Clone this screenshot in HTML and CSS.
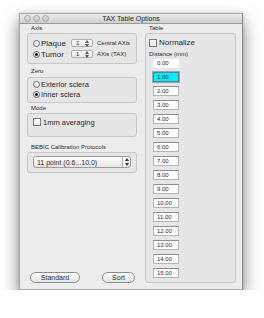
FILE: index.html
```html
<!DOCTYPE html>
<html lang="en">
<head>
  <meta charset="UTF-8" />
  <title>TAX Table Options</title>
  <link rel="stylesheet" href="styles.css">
</head>
<body>

  <div class="window">
    <div class="titlebar">
      <span class="light"></span>
      <span class="light"></span>
      <span class="light"></span>
      <span class="title">TAX Table Options</span>
    </div>

    <div class="content">
      <div class="left">
        <!-- Axis -->
        <div class="label">Axis</div>
        <div class="group axis">
          <div class="row">
            <span class="choice"><span class="radio"></span>Plaque</span>
            <span class="stepper">1<svg width="4" height="7" viewBox="0 0 4 7"><path d="M0 3 L2 0 L4 3 Z M0 4 L2 7 L4 4 Z" fill="#555"/></svg></span>
            <span class="note">Central AXis</span>
          </div>
          <div class="row">
            <span class="choice"><span class="radio on"></span>Tumor</span>
            <span class="stepper">1<svg width="4" height="7" viewBox="0 0 4 7"><path d="M0 3 L2 0 L4 3 Z M0 4 L2 7 L4 4 Z" fill="#555"/></svg></span>
            <span class="note">AXis (TAX)</span>
          </div>
        </div>

        <!-- Zero -->
        <div class="label gap">Zero</div>
        <div class="group zero">
          <div class="row small"><span class="radio"></span>Exterior sclera</div>
          <div class="row small"><span class="radio on"></span>Inner sclera</div>
        </div>

        <!-- Mode -->
        <div class="label gap2">Mode</div>
        <div class="group mode">
          <div class="row small"><span class="check"></span>1mm averaging</div>
        </div>

        <!-- Calibration -->
        <div class="label gap3">BEBIC Calibration Protocols</div>
        <div class="group bebic">
          <div class="popup">
            <span>11 point (0.6...10.0)</span>
            <span class="arrows"><svg width="4" height="8" viewBox="0 0 4 8"><path d="M0 3 L2 0 L4 3 Z M0 5 L2 8 L4 5 Z" fill="#333"/></svg></span>
          </div>
        </div>

        <div class="buttons">
          <button class="btn standard">Standard</button>
          <button class="btn sort">Sort</button>
        </div>
      </div>

      <div class="right">
        <div class="label">Table</div>
        <div class="group table">
          <div class="normalize"><span class="check"></span>Normalize</div>
          <div class="dist">Distance (mm)</div>
          <div class="field plain">0.00</div>
          <div class="fields">
            <div class="field focus">1.00</div>
            <div class="field">2.00</div>
            <div class="field">3.00</div>
            <div class="field">4.00</div>
            <div class="field">5.00</div>
            <div class="field">6.00</div>
            <div class="field">7.00</div>
            <div class="field">8.00</div>
            <div class="field">9.00</div>
            <div class="field">10.00</div>
            <div class="field">11.00</div>
            <div class="field">12.00</div>
            <div class="field">13.00</div>
            <div class="field">14.00</div>
            <div class="field">15.00</div>
          </div>
        </div>
      </div>
    </div>
  </div>

</body>
</html>
```

FILE: styles.css
```css
body {
  margin: 0;
  background: #fff;
  font-family: "Liberation Sans", Arial, sans-serif;
  color: #2a2a2a;
}
.window {
  margin: 13px 0 0 19px;
  width: 224px;
  height: 277px;
  box-sizing: border-box;
  background: #ececec;
  border: 1px solid #a8a8a8;
  border-right-color: #8c8c8c;
  box-shadow: 0 8px 16px rgba(0, 0, 0, 0.5), 0 0 3px rgba(0, 0, 0, 0.15);
  display: flex;
  flex-direction: column;
}
.titlebar {
  position: relative;
  height: 9px;
  background: linear-gradient(#ebebeb, #cfcfcf);
  border-bottom: 1px solid #9a9a9a;
  display: flex;
  align-items: center;
  gap: 2px;
  padding-left: 4px;
}
.light {
  width: 5px;
  height: 5px;
  border-radius: 50%;
  background: linear-gradient(#e4e4e4, #c2c2c2);
  border: 1px solid #a6a6a6;
}
.title {
  position: absolute;
  left: 0;
  right: 0;
  top: 0;
  text-align: center;
  font-size: 7px;
  line-height: 9px;
  color: #2a2a2a;
}
.content {
  flex: 1;
  display: flex;
  gap: 8px;
  padding: 1px 6px 6px 7px;
}
.left {
  width: 110px;
  display: flex;
  flex-direction: column;
}
.right {
  width: 91px;
  display: flex;
  flex-direction: column;
}
.label {
  font-size: 6px;
  line-height: 7px;
  padding-left: 4px;
  margin-bottom: 1px;
}
.label.gap { margin-top: 4px; margin-bottom: 2px; }
.label.gap2 { margin-top: 2px; }
.label.gap3 { margin-top: 7px; }
.group {
  border: 1px solid #c8c8c8;
  border-radius: 3px;
  background: #e6e6e6;
}
.axis {
  padding: 4px 0 4px 5px;
  display: flex;
  flex-direction: column;
  gap: 1px;
}
.row {
  height: 10px;
  display: flex;
  align-items: center;
  font-size: 8px;
}
.row.small {
  font-size: 7.5px;
}
.choice {
  width: 38px;
  display: flex;
  align-items: center;
}
.radio {
  width: 5px;
  height: 5px;
  border-radius: 50%;
  border: 1px solid #6e6e6e;
  background: linear-gradient(#fff, #e2e2e2);
  margin-right: 1px;
  position: relative;
}
.radio.on::after {
  content: "";
  position: absolute;
  left: 1px;
  top: 1px;
  width: 3px;
  height: 3px;
  border-radius: 50%;
  background: #1c1c1c;
}
.check {
  width: 6px;
  height: 6px;
  border: 1px solid #7a7a7a;
  background: linear-gradient(#fff, #e8e8e8);
  margin-right: 2px;
}
.stepper {
  width: 22px;
  height: 8px;
  box-sizing: border-box;
  border: 1px solid #b0b0b0;
  border-radius: 2px;
  background: linear-gradient(#fafafa, #e9e9e9);
  font-size: 6px;
  line-height: 6px;
  display: flex;
  align-items: center;
  justify-content: space-between;
  padding: 0 3px 0 4px;
}
.note {
  font-size: 6px;
  margin-left: 4px;
}
.zero {
  padding: 1px 0 3px 5px;
}
.mode {
  padding: 3px 0 0 5px;
  height: 19px;
}
.bebic {
  padding: 3px 5px 4px 5px;
}
.popup {
  height: 12px;
  box-sizing: border-box;
  border: 1px solid #9c9c9c;
  border-radius: 3px;
  background: linear-gradient(#ffffff, #e6e6e6);
  font-size: 7px;
  display: flex;
  align-items: center;
  justify-content: space-between;
  padding-left: 3px;
}
.arrows {
  width: 7px;
  height: 10px;
  border-left: 1px solid #b4b4b4;
  display: flex;
  align-items: center;
  justify-content: center;
}
.buttons {
  margin-top: auto;
  display: flex;
  gap: 22px;
  padding-left: 3px;
}
.btn {
  height: 11px;
  padding: 0;
  border: 1px solid #8a8a8a;
  border-radius: 6px;
  background: linear-gradient(#ffffff, #e4e4e4);
  font-family: "Liberation Sans", Arial, sans-serif;
  font-size: 7px;
  line-height: 9px;
  color: #2a2a2a;
}
.standard { width: 50px; }
.sort { width: 33px; }
.table {
  flex: 1;
  padding: 4px 0 0 3px;
}
.normalize {
  height: 9px;
  display: flex;
  align-items: center;
  font-size: 8px;
}
.dist {
  font-size: 6px;
  line-height: 7px;
  margin-top: 4px;
}
.field {
  width: 26px;
  height: 10px;
  box-sizing: border-box;
  margin-left: 4px;
  background: #fff;
  border: 1px solid #b4b4b4;
  border-top-color: #8e8e8e;
  font-size: 6px;
  line-height: 8px;
  padding-left: 3px;
}
.field.plain {
  border: none;
  height: 9px;
  line-height: 9px;
  margin-top: 1px;
  padding-left: 4px;
}
.field.focus {
  background: #00eef8;
  border-color: #5f7e96;
  box-shadow: 0 0 0 1px #93a8b9;
}
.fields {
  margin-top: 4px;
  display: flex;
  flex-direction: column;
  gap: 4px;
}
```
